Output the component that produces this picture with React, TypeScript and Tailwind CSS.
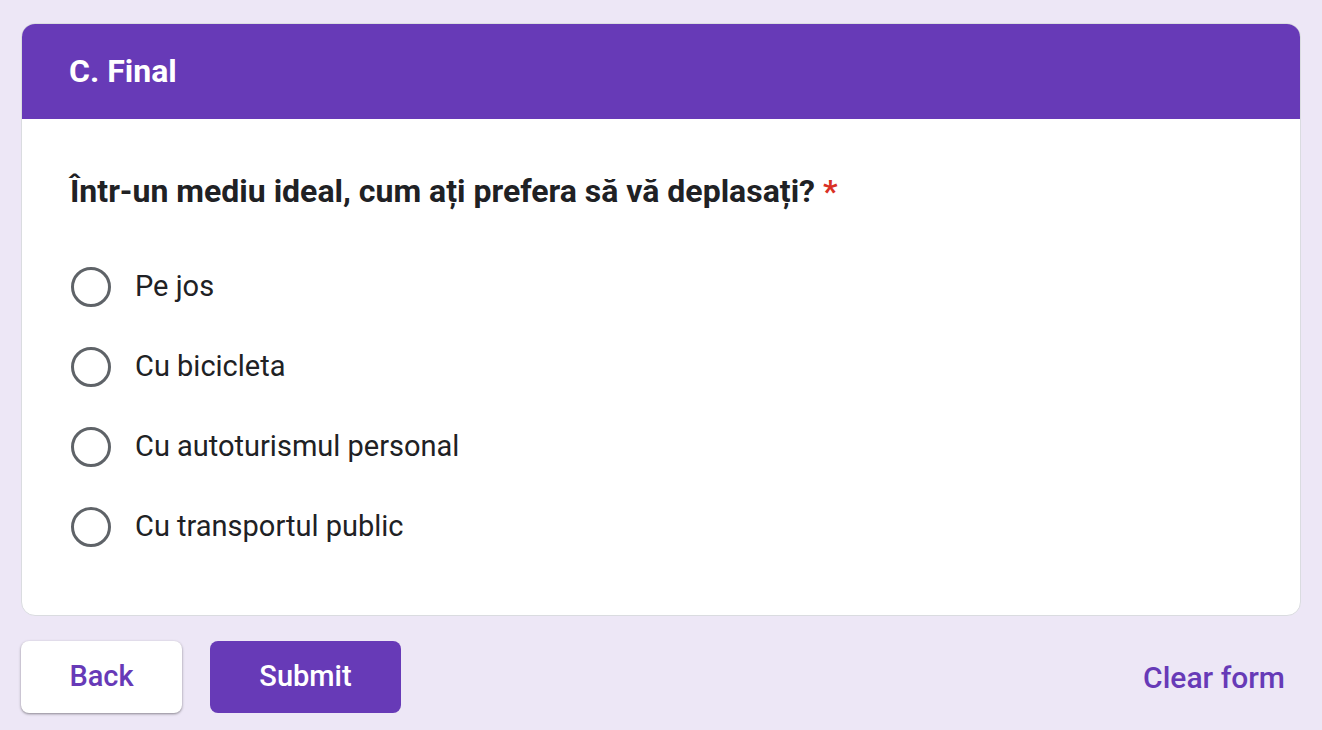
import { useState } from 'react';

const options = ['Pe jos', 'Cu bicicleta', 'Cu autoturismul personal', 'Cu transportul public'];

export default function App() {
  const [selected, setSelected] = useState<number | null>(null);

  return (
    <div className="min-h-screen bg-[#ede7f6] px-[21px] pt-[23px] font-['Roboto',sans-serif]">
      {/* Section card */}
      <div className="rounded-[14px] border border-[#dadce0] bg-white overflow-hidden">
        <div className="bg-[#673ab7] h-[96px] flex items-center px-[48px] -mx-px -mt-px">
          <h1 className="text-white text-[32px] font-bold">C. Final</h1>
        </div>
        <div className="px-[48px] pt-[52px] pb-[68px]">
          <div className="text-[32px] font-bold text-[#202124] leading-[40px]">
            Într-un mediu ideal, cum ați prefera să vă deplasați? <span className="text-[#d93025]">*</span>
          </div>
          <div className="mt-[56px] flex flex-col gap-[40px]">
            {options.map((opt, i) => (
              <label
                key={opt}
                className="flex items-center gap-[24px] cursor-pointer h-[40px]"
                onClick={() => setSelected(i)}
              >
                <span className="ml-px w-[40px] h-[40px] rounded-full border-[3px] border-[#5f6368] flex items-center justify-center shrink-0">
                  {selected === i && <span className="w-[20px] h-[20px] rounded-full bg-[#673ab7]" />}
                </span>
                <span className="text-[29px] text-[#202124]">{opt}</span>
              </label>
            ))}
          </div>
        </div>
      </div>

      {/* Footer buttons */}
      <div className="mt-[25px] flex items-center">
        <button className="w-[161px] h-[72px] rounded-[8px] bg-white text-[#673ab7] text-[29px] font-medium shadow-[0_1px_3px_rgba(0,0,0,0.3),0_1px_2px_rgba(0,0,0,0.15)]">
          Back
        </button>
        <button className="ml-[28px] w-[191px] h-[72px] rounded-[8px] bg-[#673ab7] text-white text-[29px] font-medium">
          Submit
        </button>
        <button className="ml-auto mr-[16px] text-[#673ab7] text-[30px] font-medium">Clear form</button>
      </div>
    </div>
  );
}
